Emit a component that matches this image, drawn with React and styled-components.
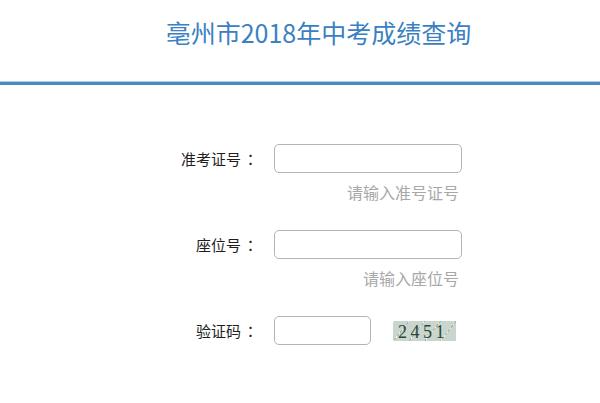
import React from 'react';
import styled, { createGlobalStyle } from 'styled-components';

const GlobalStyle = createGlobalStyle`
  html, body {
    margin: 0;
    padding: 0;
    background: #fff;
  }
  body {
    font-family: "Noto Sans CJK SC", "Noto Sans", sans-serif;
  }
`

const Header = styled.div`
  height: 85px;
  box-sizing: border-box;
  padding-top: 15px;
  padding-left: 37px;
  text-align: center;
  border-bottom: 3px solid #4f88bb;
  box-shadow: 0 -1px 0 #a9d2f2 inset;
`

const Title = styled.h1`
  margin: 0;
  font-size: 25px;
  font-weight: 400;
  line-height: 34px;
  color: #3a80c2;
`

const Form = styled.div`
  width: 304px;
  margin: 0 auto;
  padding: 59px 0 0 20px;
`

const Field = styled.div`
  display: grid;
  grid-template-columns: 100px 188px;
  column-gap: 16px;
  align-items: center;
  margin-bottom: 28px;
`

const Label = styled.label`
  text-align: right;
  font-size: 15px;
  line-height: 20px;
  color: #1e1e1e;
`

const Colon = styled.span`
  font-family: "Noto Sans CJK TC", "Noto Sans CJK SC", sans-serif;
  margin-left: 2px;
`

const Input = styled.input`
  box-sizing: border-box;
  width: ${p => p.$width || 188}px;
  height: 29px;
  border: 1px solid #b4b4b4;
  border-radius: 5px;
  background: #fff;
  outline: none;
  padding: 0 6px;
  font-size: 14px;
`

const Hint = styled.div`
  grid-column: 2;
  text-align: right;
  margin-top: 9px;
  padding-right: 3px;
  font-size: 16px;
  line-height: 20px;
  color: #a8a8a8;
`

const CodeRow = styled.div`
  display: flex;
  align-items: center;
  gap: 22px;
`

function Captcha() {
  const dots = [];
  for (let i = 0; i < 90; i++) {
    const x = (i * 37) % 63;
    const y = (i * 13) % 20;
    dots.push(<rect key={i} x={x} y={y} width="1" height="1" fill={i % 3 ? '#a3b6aa' : '#edf2ee'} />);
  }
  return (
    <svg width="63" height="20" viewBox="0 0 63 20">
      <rect width="63" height="20" fill="#c9d5cd" />
      {dots}
      <text x="5" y="16.5" fontFamily="Liberation Serif, serif" fontSize="18" fill="#2b4638" letterSpacing="3.5">2451</text>
    </svg>
  );
}

export default function App() {
  return (
    <>
      <GlobalStyle />
      <Header>
        <Title>亳州市2018年中考成绩查询</Title>
      </Header>
      <Form>
        <Field>
          <Label>准考证号<Colon>：</Colon></Label>
          <Input />
          <Hint>请输入准号证号</Hint>
        </Field>
        <Field>
          <Label>座位号<Colon>：</Colon></Label>
          <Input />
          <Hint>请输入座位号</Hint>
        </Field>
        <Field>
          <Label>验证码<Colon>：</Colon></Label>
          <CodeRow>
            <Input $width={97} />
            <Captcha />
          </CodeRow>
        </Field>
      </Form>
    </>
  );
}
